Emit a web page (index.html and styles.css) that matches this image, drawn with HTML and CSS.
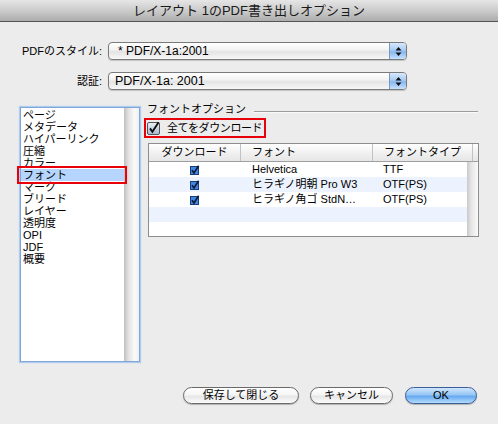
FILE: index.html
```html
<!DOCTYPE html>
<html lang="ja">
<head>
<meta charset="utf-8">
<title>PDF書き出しオプション</title>
<link rel="stylesheet" href="styles.css">
</head>
<body>
<div class="window">
  <div class="titlebar">レイアウト 1のPDF書き出しオプション</div>

  <div class="fields">
    <span class="label">PDFのスタイル:</span>
    <div class="popup">
      <span class="ptext">* PDF/X-1a:2001</span>
      <span class="arrows"><svg width="7" height="11" viewBox="0 0 7 11"><path d="M3.5 1 L6.5 4.5 L0.5 4.5 Z M0.5 6.5 L6.5 6.5 L3.5 10 Z" fill="#111"/></svg></span>
    </div>
    <span class="label">認証:</span>
    <div class="popup">
      <span class="ptext ptext2">PDF/X-1a: 2001</span>
      <span class="arrows"><svg width="7" height="11" viewBox="0 0 7 11"><path d="M3.5 1 L6.5 4.5 L0.5 4.5 Z M0.5 6.5 L6.5 6.5 L3.5 10 Z" fill="#111"/></svg></span>
    </div>
  </div>

  <div class="content">
    <div class="listbox">
      <ul class="list">
        <li>ページ</li>
        <li>メタデータ</li>
        <li>ハイパーリンク</li>
        <li>圧縮</li>
        <li>カラー</li>
        <li class="sel">フォント</li>
        <li>マーク</li>
        <li>ブリード</li>
        <li>レイヤー</li>
        <li>透明度</li>
        <li>OPI</li>
        <li>JDF</li>
        <li>概要</li>
      </ul>
      <div class="vscroll"></div>
    </div>

    <div class="panel">
      <div class="legend"><span class="legend-text">フォントオプション</span><span class="rule"></span></div>
      <div class="allbox">
        <svg class="bigcb" width="14" height="14" viewBox="0 0 14 14">
          <defs><linearGradient id="cbg" x1="0" y1="0" x2="0" y2="1"><stop offset="0" stop-color="#eef2f8"/><stop offset="1" stop-color="#a6b8d0"/></linearGradient></defs>
          <rect x="0.5" y="1.5" width="12" height="12" rx="1.5" fill="url(#cbg)" stroke="#555"/>
          <path d="M3 7.4 L5.4 10.8 L11.6 1.2" fill="none" stroke="#111" stroke-width="1.9"/>
        </svg>
        <span class="alltext">全てをダウンロード</span>
      </div>

      <div class="table">
        <div class="thead">
          <div class="th th-center">ダウンロード</div>
          <div class="th">フォント</div>
          <div class="th">フォントタイプ</div>
          <div class="th th-fill"></div>
        </div>
        <div class="tbody">
          <div class="rows">
            <div class="tr">
              <div class="td td-center"><svg width="10" height="10" viewBox="0 0 10 10"><rect x="0.5" y="1.5" width="8" height="8" fill="#3f86e0" stroke="#1b3c78"/><path d="M2 5.2 L4 8 L8.6 0.8" fill="none" stroke="#0c1a3a" stroke-width="1.6"/></svg></div>
              <div class="td">Helvetica</div>
              <div class="td td-type">TTF</div>
            </div>
            <div class="tr alt">
              <div class="td td-center"><svg width="10" height="10" viewBox="0 0 10 10"><rect x="0.5" y="1.5" width="8" height="8" fill="#3f86e0" stroke="#1b3c78"/><path d="M2 5.2 L4 8 L8.6 0.8" fill="none" stroke="#0c1a3a" stroke-width="1.6"/></svg></div>
              <div class="td">ヒラギノ明朝 Pro W3</div>
              <div class="td td-type">OTF(PS)</div>
            </div>
            <div class="tr">
              <div class="td td-center"><svg width="10" height="10" viewBox="0 0 10 10"><rect x="0.5" y="1.5" width="8" height="8" fill="#3f86e0" stroke="#1b3c78"/><path d="M2 5.2 L4 8 L8.6 0.8" fill="none" stroke="#0c1a3a" stroke-width="1.6"/></svg></div>
              <div class="td">ヒラギノ角ゴ StdN…</div>
              <div class="td td-type">OTF(PS)</div>
            </div>
            <div class="tr alt"></div>
            <div class="tr"></div>
          </div>
          <div class="tscroll"></div>
        </div>
      </div>
    </div>
  </div>

  <div class="buttons">
    <button class="btn btn-save">保存して閉じる</button>
    <button class="btn btn-cancel">キャンセル</button>
    <button class="btn btn-ok">OK</button>
  </div>
</div>
</body>
</html>
```

FILE: styles.css
```css
html, body {
  margin: 0;
  padding: 0;
}
body {
  background: #ececec;
  font-family: "Liberation Sans", "Noto Sans CJK JP", sans-serif;
  font-size: 11px;
  color: #000;
}
.window {
  width: 498px;
  height: 424px;
  overflow: hidden;
  background: #ececec;
}
.titlebar {
  height: 21px;
  border-bottom: 1px solid #555;
  background: linear-gradient(#e6e6e6, #c9c9c9 55%, #acacac);
  text-align: center;
  font-size: 13px;
  line-height: 21px;
  color: #1a1a1a;
}

/* fields */
.fields {
  display: grid;
  grid-template-columns: 102px 299px;
  column-gap: 6px;
  row-gap: 12px;
  padding-top: 20px;
  align-items: center;
}
.label {
  text-align: right;
  font-size: 11px;
  line-height: 14px;
}
.popup {
  height: 18px;
  box-sizing: border-box;
  border: 1px solid #7a7a7a;
  border-radius: 4px;
  background: linear-gradient(#ffffff, #f4f4f4 40%, #e4e4e4 55%, #f7f7f7);
  display: flex;
  overflow: hidden;
  box-shadow: 0 1px 1px rgba(0, 0, 0, 0.18);
}
.ptext {
  flex: 1;
  padding-left: 9px;
  font-size: 12px;
  line-height: 16px;
}
.ptext2 {
  padding-left: 6px;
  font-size: 12.5px;
}
.arrows {
  width: 16px;
  border-left: 1px solid #7b96c2;
  background: linear-gradient(#d6e8fc, #a9cbf3 45%, #86b6ee 55%, #c6e3ff);
  display: flex;
  align-items: center;
  justify-content: center;
}

/* content */
.content {
  display: flex;
  align-items: flex-start;
  margin-top: 12px;
}
.listbox {
  margin-left: 20px;
  margin-top: 5px;
  width: 120px;
  height: 255px;
  box-sizing: border-box;
  border: 1px solid #7ea6d8;
  box-shadow: 0 0 1px 1px #b0cdef;
  background: #fff;
  display: flex;
}
.list {
  flex: 1;
  list-style: none;
  margin: 0;
  padding: 1px 0 0 0;
}
.list li {
  height: 12px;
  line-height: 12px;
  padding-left: 2px;
  white-space: nowrap;
  font-size: 11px;
}
.list li.sel {
  background: #b5d5ff;
  position: relative;
}
.list li.sel::after {
  content: "";
  position: absolute;
  left: -4px;
  right: -3px;
  top: -3px;
  bottom: -3px;
  border: 2px solid #e8000b;
}
.vscroll {
  width: 15px;
  background: linear-gradient(to right, #c0c0c0, #e2e2e2 30%, #f9f9f9 70%, #f1f1f1);
}

/* panel */
.panel {
  margin-left: 7px;
  width: 332px;
}
.legend {
  display: flex;
  align-items: flex-start;
  height: 14px;
}
.legend-text {
  line-height: 14px;
  white-space: nowrap;
}
.rule {
  flex: 1;
  margin-top: 9px;
  margin-left: 8px;
  margin-right: 1px;
  border-top: 1px solid #9c9c9c;
  border-bottom: 1px solid #fafafa;
}
.allbox {
  display: inline-flex;
  align-items: center;
  height: 20px;
  box-sizing: border-box;
  border: 2px solid #e8000b;
  padding: 0 2px 0 1px;
  gap: 6px;
  margin-left: -3px;
  margin-top: 2px;
  line-height: 14px;
}
.alltext {
  letter-spacing: -0.4px;
}
.bigcb {
  display: block;
}

/* table */
.table {
  margin-top: 5px;
  margin-left: 1px;
  width: 331px;
  box-sizing: border-box;
  border: 1px solid #8d8d8d;
  background: #fff;
}
.thead {
  display: grid;
  grid-template-columns: 92px 132px 100px 1fr;
  height: 18px;
  box-sizing: border-box;
  border-bottom: 1px solid #a0a0a0;
  background: linear-gradient(#ffffff, #f1f1f1 50%, #e6e6e6);
}
.th {
  border-right: 1px solid #c2c2c2;
  line-height: 17px;
  padding-left: 11px;
  white-space: nowrap;
  overflow: hidden;
}
.th-center {
  text-align: center;
  padding-left: 0;
}
.th-fill {
  border-right: 0;
  padding-left: 0;
}
.tbody {
  display: flex;
  height: 74px;
}
.rows {
  flex: 1;
  overflow: hidden;
}
.tr {
  display: grid;
  grid-template-columns: 92px 132px 1fr;
  height: 15px;
  line-height: 15px;
  background: #fff;
}
.tr.alt {
  background: #edf3fe;
}
.td {
  padding-left: 11px;
  white-space: nowrap;
  overflow: hidden;
}
.td-center {
  padding-left: 0;
  display: flex;
  align-items: center;
  justify-content: center;
}
.td-type {
  padding-left: 10px;
}
.tscroll {
  width: 11px;
  background: linear-gradient(to right, #c9c9c9, #e6e6e6 40%, #fafafa);
}

/* buttons */
.buttons {
  display: flex;
  justify-content: flex-end;
  padding-right: 21px;
  margin-top: 25px;
}
.btn {
  height: 17px;
  box-sizing: border-box;
  border: 1px solid #6a6a6a;
  border-radius: 9px;
  background: linear-gradient(#ffffff, #f5f5f5 45%, #e7e7e7 55%, #fbfbfb);
  font-family: "Liberation Sans", "Noto Sans CJK JP", sans-serif;
  font-size: 11px;
  line-height: 15px;
  padding: 0;
  text-align: center;
  color: #000;
  box-shadow: 0 1px 1px rgba(0, 0, 0, 0.25);
}
.btn-save {
  width: 116px;
}
.btn-cancel {
  width: 83px;
  margin-left: 11px;
}
.btn-ok {
  width: 72px;
  margin-left: 12px;
  border-color: #3d5d96;
  background: linear-gradient(#cfe6fd, #97c6f3 45%, #66a9ef 55%, #b3dbff);
}
```
